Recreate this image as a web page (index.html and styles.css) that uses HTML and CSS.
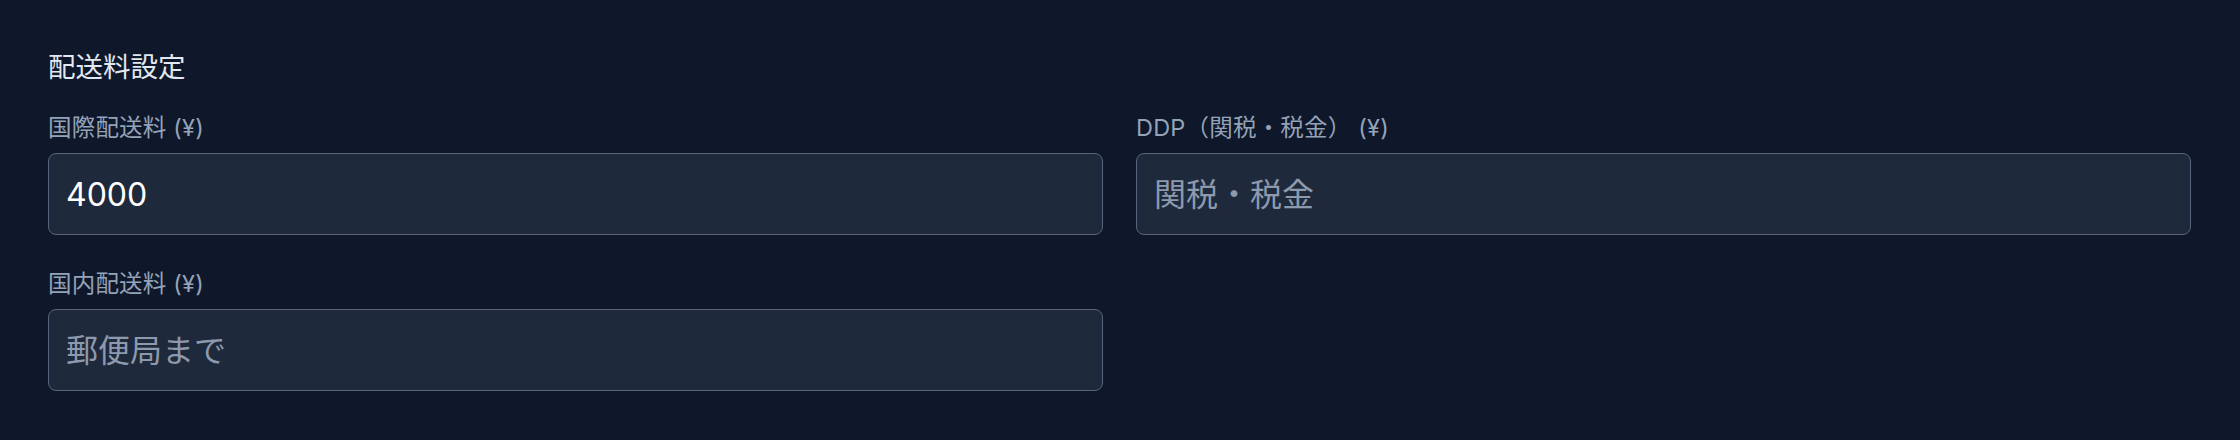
FILE: index.html
```html
<!DOCTYPE html>
<html lang="ja">
<head>
<meta charset="utf-8">
<title>配送料設定</title>
<link rel="stylesheet" href="styles.css">
</head>
<body>
<section class="panel">
  <h2 class="heading">配送料設定</h2>
  <div class="grid">
    <div class="field">
      <label class="label" for="intl">国際配送料 (¥)</label>
      <input class="input" id="intl" type="text" value="4000">
    </div>
    <div class="field">
      <label class="label" for="ddp">DDP（関税・税金） (¥)</label>
      <input class="input" id="ddp" type="text" placeholder="関税・税金">
    </div>
    <div class="field">
      <label class="label" for="dom">国内配送料 (¥)</label>
      <input class="input" id="dom" type="text" placeholder="郵便局まで">
    </div>
  </div>
</section>
</body>
</html>
```

FILE: styles.css
```css
html, body {
  margin: 0;
  padding: 0;
  background: #0f172a;
}

body {
  font-family: Inter, "Noto Sans CJK JP", sans-serif;
}

.panel {
  padding: 48px 49px 0 48px;
}

.heading {
  margin: 0 0 24px;
  font-size: 27.5px;
  line-height: 39px;
  font-weight: 400;
  color: #e2e8f0;
}

.grid {
  display: grid;
  grid-template-columns: 1fr 1fr;
  column-gap: 33px;
  row-gap: 32px;
}

.field {
  display: flex;
  flex-direction: column;
}

.label {
  font-size: 23.5px;
  line-height: 34px;
  margin-bottom: 8px;
  color: #94a3b8;
  letter-spacing: 0.2px;
}

.input {
  box-sizing: border-box;
  height: 82px;
  width: 100%;
  margin: 0;
  padding: 0 17px;
  border: 1px solid #56657d;
  border-radius: 8px;
  background: #1e293b;
  color: #ffffff;
  font-family: Inter, "Noto Sans CJK JP", sans-serif;
  font-size: 32px;
  outline: none;
}

.input::placeholder {
  color: #8d99ad;
  opacity: 1;
}
```
